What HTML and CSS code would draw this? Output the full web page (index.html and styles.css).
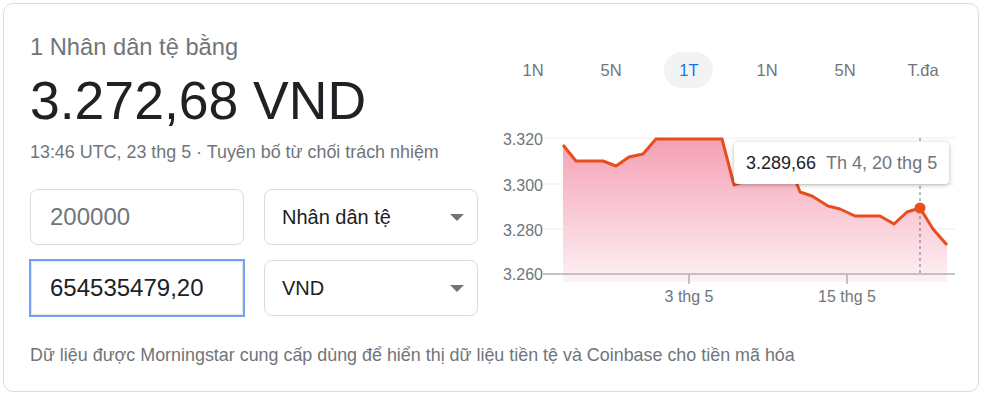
FILE: index.html
```html
<!DOCTYPE html>
<html lang="vi">
<head>
  <meta charset="UTF-8" />
  <meta name="viewport" content="width=device-width, initial-scale=1" />
  <title>Nhân dân tệ sang VND</title>
  <link rel="stylesheet" href="styles.css">
</head>
<body>

  <div class="card">
    <div class="top">
      <div class="left">
        <div class="title">1 Nhân dân tệ bằng</div>
        <div class="value">3.272,68 VND</div>
        <div class="meta">13:46 UTC, 23 thg 5 · Tuyên bố từ chối trách nhiệm</div>

        <div class="converter">
          <div class="field"><span class="amount muted">200000</span></div>
          <div class="field select"><span>Nhân dân tệ</span><i class="arrow"></i></div>
          <div class="field focused"><span class="amount">654535479,20</span></div>
          <div class="field select"><span>VND</span><i class="arrow"></i></div>
        </div>
      </div>

      <div class="right">
        <div class="tabs">
          <span class="tab">1N</span>
          <span class="tab">5N</span>
          <span class="tab active">1T</span>
          <span class="tab">1N</span>
          <span class="tab">5N</span>
          <span class="tab">T.đa</span>
        </div>

        <div class="chart">
          <svg width="468" height="185" viewBox="494 120 468 185">
            <defs>
              <linearGradient id="fillGrad" x1="0" y1="0" x2="0" y2="1">
                <stop offset="0" stop-color="#f4a0b5" />
                <stop offset="1" stop-color="#fdf1f4" />
              </linearGradient>
            </defs>

            <g class="grid">
              <line x1="543" y1="138" x2="955" y2="138" />
              <line x1="543" y1="184" x2="955" y2="184" />
              <line x1="543" y1="229" x2="955" y2="229" />
            </g>

            <polygon fill="url(#fillGrad)"
              points="563,145 576,161 603,161 616,166 629,157 643,154 656,139 722,139 734,185 748,180 772,177 795,179 800,192 812,196 828,206 840,209 855,216 880,216 894,224 907,212 920,208 933,229 947,245 947,282 563,282" />

            <line class="axis" x1="543" y1="274" x2="955" y2="274" />
            <line class="axis" x1="689" y1="274" x2="689" y2="284" />
            <line class="axis" x1="847" y1="274" x2="847" y2="284" />

            <line class="hover" x1="920" y1="138" x2="920" y2="274" />

            <polyline class="line"
              points="563,145 576,161 603,161 616,166 629,157 643,154 656,139 722,139 734,185 748,180 772,177 795,179 800,192 812,196 828,206 840,209 855,216 880,216 894,224 907,212 920,208 933,229 947,245" />
            <circle cx="920" cy="208" r="5.5" fill="#e84e1b" />

            <g class="ylabels">
              <text x="543" y="139">3.320</text>
              <text x="543" y="185">3.300</text>
              <text x="543" y="230">3.280</text>
              <text x="543" y="274">3.260</text>
            </g>
            <g class="xlabels">
              <text x="689" y="296">3 thg 5</text>
              <text x="847" y="296">15 thg 5</text>
            </g>
          </svg>

          <div class="tooltip">
            <span class="tip-value">3.289,66</span>
            <span class="tip-date">Th 4, 20 thg 5</span>
          </div>
        </div>
      </div>
    </div>

    <div class="source">Dữ liệu được Morningstar cung cấp dùng để hiển thị dữ liệu tiền tệ và Coinbase cho tiền mã hóa</div>
  </div>

</body>
</html>
```

FILE: styles.css
```css
* { box-sizing: border-box; margin: 0; padding: 0; }

body {
  background: #fff;
  font-family: 'Liberation Sans', Arial, sans-serif;
  color: #202124;
}

.card {
  margin: 3px;
  width: 976px;
  height: 389px;
  border: 1px solid #dadce0;
  border-radius: 10px;
  padding: 29px 15px 0 26px;
}

.top {
  display: flex;
  gap: 17px;
}

.left {
  width: 447px;
}

.title {
  font-size: 23.7px;
  line-height: 28px;
  color: #70757a;
}

.value {
  margin-top: 10px;
  font-size: 53.5px;
  line-height: 60px;
  color: #202124;
}

.meta {
  margin-top: 10px;
  font-size: 17.9px;
  line-height: 22px;
  color: #70757a;
}

.converter {
  margin-top: 26px;
  display: grid;
  grid-template-columns: 214px 214px;
  column-gap: 20px;
  row-gap: 15px;
}

.field {
  height: 56px;
  border: 1px solid #dadce0;
  border-radius: 8px;
  display: flex;
  align-items: center;
  padding-left: 19px;
  font-size: 24px;
}

.field.focused {
  outline: 2px solid #74a3f5;
  outline-offset: -1px;
  border-radius: 0;
  box-shadow: inset 0 0 0 1px #e4e6ea;
}

.muted {
  color: #70757a;
}

.select {
  font-size: 20px;
  padding-left: 17px;
  padding-right: 13px;
  justify-content: space-between;
}

.arrow {
  width: 0;
  height: 0;
  border-left: 7px solid transparent;
  border-right: 7px solid transparent;
  border-top: 7px solid #70757a;
}

.right {
  width: 468px;
}

.tabs {
  margin-top: 19px;
  display: flex;
}

.tab {
  width: 78px;
  height: 36px;
  display: flex;
  align-items: center;
  justify-content: center;
  font-size: 16.5px;
  color: #70757a;
}

.tab.active {
  color: #1a73e8;
  position: relative;
}

.tab.active::before {
  content: "";
  position: absolute;
  left: 14px;
  right: 15px;
  top: 0;
  bottom: 0;
  background: #f1f3f4;
  border-radius: 18px;
  z-index: -1;
}

.chart {
  margin-top: 32px;
  position: relative;
  height: 185px;
}

.chart svg {
  display: block;
}

.grid line {
  stroke: #ededed;
  stroke-width: 1;
}

.axis {
  stroke: #b0b0b0;
  stroke-width: 1.5;
}

.hover {
  stroke: #70757a;
  stroke-width: 1;
  stroke-dasharray: 3 3;
}

.line {
  fill: none;
  stroke: #e84e1b;
  stroke-width: 3;
  stroke-linejoin: round;
}

.ylabels text {
  font-size: 16px;
  fill: #70757a;
  text-anchor: end;
  dominant-baseline: central;
}

.xlabels text {
  font-size: 16px;
  fill: #70757a;
  text-anchor: middle;
  dominant-baseline: central;
}

.tooltip {
  position: absolute;
  left: 240px;
  top: 22px;
  width: 215px;
  height: 42px;
  background: #fff;
  border-radius: 4px;
  box-shadow: 0 1px 4px rgba(0, 0, 0, 0.3);
  display: flex;
  align-items: center;
  gap: 10px;
  padding-left: 12px;
  font-size: 18px;
}

.tip-value {
  color: #202124;
}

.tip-date {
  color: #70757a;
}

.source {
  margin-top: 29px;
  font-size: 17.9px;
  line-height: 20px;
  color: #70757a;
}
```
